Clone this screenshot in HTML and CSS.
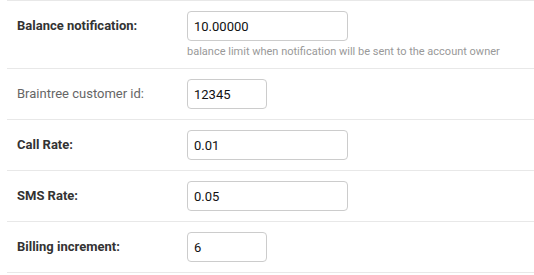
FILE: index.html
```html
<!DOCTYPE html>
<html lang="en">
<head>
    <meta charset="UTF-8">
    <title>Billing settings</title>
    <link rel="stylesheet" href="styles.css">
</head>
<body>

<div class="settings">
    <div class="form-row">
        <label class="form-label required">Balance notification:</label>
        <div class="form-field">
            <input type="text" class="form-input" value="10.00000">
            <div class="help-text">balance limit when notification will be sent to the account owner</div>
        </div>
    </div>
    <div class="form-row">
        <label class="form-label">Braintree customer id:</label>
        <div class="form-field">
            <input type="text" class="form-input short" value="12345">
        </div>
    </div>
    <div class="form-row">
        <label class="form-label required">Call Rate:</label>
        <div class="form-field">
            <input type="text" class="form-input" value="0.01">
        </div>
    </div>
    <div class="form-row">
        <label class="form-label required">SMS Rate:</label>
        <div class="form-field">
            <input type="text" class="form-input" value="0.05">
        </div>
    </div>
    <div class="form-row last">
        <label class="form-label required">Billing increment:</label>
        <div class="form-field">
            <input type="text" class="form-input short" value="6">
        </div>
    </div>
</div>

</body>
</html>
```

FILE: styles.css
```css
/* General styles */
body {
    font-family: Roboto, "Liberation Sans", sans-serif;
    background-color: #fff;
    color: #333;
    margin: 0;
    padding: 0;
}

.settings {
    margin-left: 7px;
}

.form-row {
    display: flex;
    border-top: 1px solid #e8e8e8;
    padding: 10px 0;
}

.form-row.last {
    border-bottom: 1px solid #e8e8e8;
}

.form-label {
    width: 170px;
    padding-left: 10px;
    height: 30px;
    line-height: 30px;
    font-size: 13px;
    color: #666;
}

.form-label.required {
    font-weight: bold;
    color: #333;
}

.form-field {
    display: flex;
    flex-direction: column;
}

.form-input {
    box-sizing: border-box;
    width: 161px;
    height: 30px;
    margin: 0;
    padding: 0 6px;
    border: 1px solid #ccc;
    border-radius: 4px;
    font-family: Roboto, "Liberation Sans", sans-serif;
    font-size: 13px;
    color: #111;
}

.form-input.short {
    width: 80px;
}

.help-text {
    margin-top: 4px;
    font-size: 11px;
    line-height: 13px;
    color: #999;
}
```
